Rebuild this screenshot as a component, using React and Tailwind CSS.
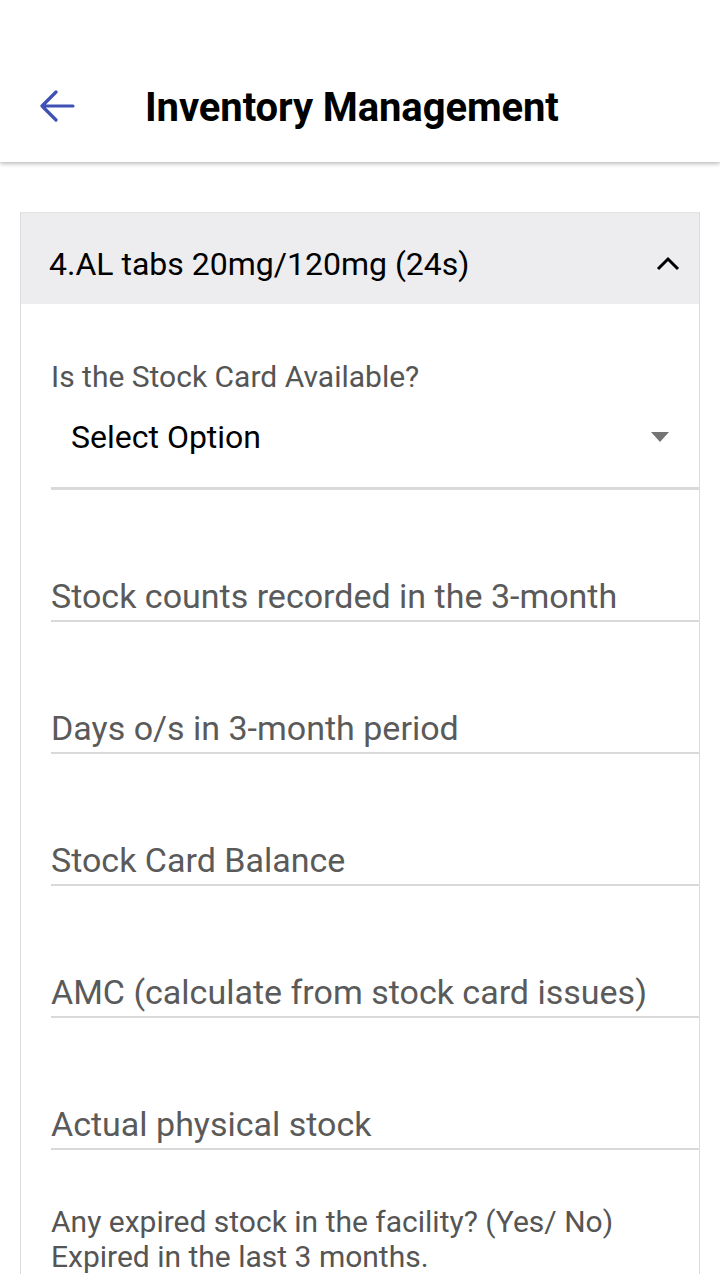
export default function App() {
  const fields = [
    "Stock counts recorded in the 3-month",
    "Days o/s in 3-month period",
    "Stock Card Balance",
    "AMC (calculate from stock card issues)",
    "Actual physical stock",
  ];
  return (
    <div className="w-[720px] h-[1280px] overflow-hidden bg-white" style={{ fontFamily: "Roboto, 'Noto Sans', sans-serif" }}>
      <div className="h-[162px] pt-[54px] bg-white shadow-[0_2px_4px_rgba(0,0,0,0.25)] relative z-10">
        <div className="h-[108px] flex items-center">
          <div className="w-[145px] flex items-center pl-[38px]">
            <svg width="38" height="36" viewBox="0 0 38 36">
              <path d="M35 16 H4 M18 2 L4 16 L18 30" fill="none" stroke="#3f51b5" strokeWidth="3.2" strokeLinecap="round" strokeLinejoin="round" />
            </svg>
          </div>
          <div className="text-[40px] font-bold text-black tracking-[-0.1px]">Inventory Management</div>
        </div>
      </div>
      <div className="pt-[50px] pl-[20px]">
        <div className="w-[680px] border-x border-[#dcdcdc]">
          <div className="h-[92px] bg-[#edecee] border-t border-[#e4e4e4] flex items-center justify-between pl-[28px] pr-[18px] pt-[10px]">
            <span className="text-[32px] text-black">4.AL tabs 20mg/120mg (24s)</span>
            <svg width="26" height="16" viewBox="0 0 26 16">
              <path d="M3 13 L13 3 L23 13" fill="none" stroke="#000" strokeWidth="3" />
            </svg>
          </div>
          <div className="pl-[30px] pt-[57px]">
            <div className="text-[30px] leading-[32px] text-[#555555]">Is the Stock Card Available?</div>
            <div className="h-[97px] border-b-[3px] border-[#d9d9d9]">
              <div className="flex items-center justify-between pt-[21px] pl-[20px] pr-[30px]">
                <span className="text-[32px] leading-[46px] text-black">Select Option</span>
                <svg width="18" height="10" viewBox="0 0 18 10">
                  <polygon points="0,0 18,0 9,10" fill="#757575" />
                </svg>
              </div>
            </div>
            {fields.map((f) => (
              <div key={f} className="h-[132px] flex items-end">
                <div className="w-full border-b-2 border-[#d9d9d9] text-[34px] leading-[48px] text-[#5a5a5a] whitespace-nowrap">{f}</div>
              </div>
            ))}
            <div className="pt-[54px] text-[30px] leading-[35px] text-[#555555]">
              <div>Any expired stock in the facility? (Yes/ No)</div>
              <div>Expired in the last 3 months.</div>
            </div>
          </div>
        </div>
      </div>
    </div>
  );
}
